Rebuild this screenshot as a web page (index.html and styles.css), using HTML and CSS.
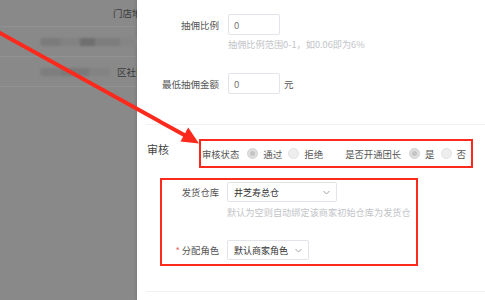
FILE: index.html
```html
<!DOCTYPE html>
<html lang="zh-CN">
<head>
    <meta charset="UTF-8">
    <meta name="viewport" content="width=device-width, initial-scale=1.0">
    <title>商家编辑</title>
    <link rel="stylesheet" href="styles.css">
</head>
<body>
    <div class="screen">
        <div class="bg-page">
            <div class="bg-row bg-head"><span class="bg-head-text">门店地址</span></div>
            <div class="bg-row"><span class="blur blur-long"></span></div>
            <div class="bg-row"><span class="blur blur-short"></span><span class="bg-cell">区社区</span></div>
        </div>

        <div class="drawer">
            <div class="form-item">
                <label class="form-label">抽佣比例</label>
                <input class="text-input" type="text" value="0">
            </div>
            <p class="hint hint-rate">抽佣比例范围0-1，如0.06即为6%</p>

            <div class="form-item item-min">
                <label class="form-label">最低抽佣金额</label>
                <input class="text-input" type="text" value="0">
                <span class="unit">元</span>
            </div>

            <div class="divider"></div>

            <div class="section">
                <div class="section-title">审核</div>
                <div class="mark-box audit-box">
                    <span class="inline-label">审核状态</span>
                    <span class="radio-group">
                        <span class="radio checked"></span><span class="radio-text">通过</span>
                        <span class="radio"></span><span class="radio-text">拒绝</span>
                    </span>
                    <span class="inline-label leader-label">是否开通团长</span>
                    <span class="radio-group">
                        <span class="radio checked"></span><span class="radio-text">是</span>
                        <span class="radio"></span><span class="radio-text">否</span>
                    </span>
                </div>
            </div>

            <div class="mark-box store-box">
                <div class="box-item">
                    <label class="box-label">发货仓库</label>
                    <div class="select select-store">
                        <span>井芝寿总仓</span>
                        <svg class="chevron" width="7" height="5" viewBox="0 0 7 5"><path d="M0.5 1 L3.5 4 L6.5 1" fill="none" stroke="#a0a3ab" stroke-width="1"/></svg>
                    </div>
                </div>
                <p class="hint hint-store">默认为空则自动绑定该商家初始仓库为发货仓</p>
                <div class="box-item item-role">
                    <label class="box-label"><span class="required">*</span>分配角色</label>
                    <div class="select select-role">
                        <span>默认商家角色</span>
                        <svg class="chevron" width="7" height="5" viewBox="0 0 7 5"><path d="M0.5 1 L3.5 4 L6.5 1" fill="none" stroke="#a0a3ab" stroke-width="1"/></svg>
                    </div>
                </div>
            </div>

            <div class="divider divider-bottom"></div>
        </div>

        <svg class="arrow" width="485" height="300" viewBox="0 0 485 300">
            <line x1="-4" y1="30.8" x2="187" y2="136.6" stroke="#fb2a1c" stroke-width="4"/>
            <polygon points="199,143.5 180.5,141.5 188.2,127.6" fill="#fb2a1c"/>
        </svg>
    </div>
</body>
</html>
```

FILE: styles.css
```css
body {
    margin: 0;
    font-family: "Noto Sans CJK SC", "Noto Sans", sans-serif;
    color: #333;
}
.screen {
    position: relative;
    width: 485px;
    height: 300px;
    overflow: hidden;
    display: flex;
}

/* dimmed page behind the drawer */
.bg-page {
    width: 137px;
    flex-shrink: 0;
    background: #898989;
    overflow: hidden;
}
.bg-row {
    height: 29px;
    border-bottom: 1px solid #929292;
    display: flex;
    align-items: center;
    white-space: nowrap;
}
.bg-head {
    height: 26px;
}
.bg-head-text {
    flex-shrink: 0;
    margin-left: 113px;
    font-size: 9.5px;
    color: #3a3a3a;
}
.blur {
    flex-shrink: 0;
    display: inline-block;
    height: 8px;
    margin-left: 40px;
    border-radius: 4px;
    filter: blur(1px);
}
.blur-long {
    width: 100px;
    background: linear-gradient(90deg, #7b7b7b 0 20%, #828282 20% 40%, #6f6f6f 40% 55%, #7d7d7d 55% 80%, #858585 80%);
}
.blur-short {
    width: 70px;
    background: linear-gradient(90deg, #7e7e7e 0 30%, #7a7a7a 30% 70%, #838383 70%);
}
.bg-cell {
    flex-shrink: 0;
    margin-left: 7px;
    font-size: 9.5px;
    color: #3a3a3a;
}

/* drawer */
.drawer {
    flex: 1;
    background: #fff;
    padding-top: 14px;
    box-shadow: -1px 0 3px rgba(0, 0, 0, 0.12);
}
.form-item {
    display: flex;
    align-items: center;
    height: 21px;
}
.item-min {
    margin-top: 24px;
}
.form-label {
    width: 82px;
    text-align: right;
    font-size: 9.5px;
    color: #555;
    margin-right: 9px;
}
.text-input {
    box-sizing: border-box;
    width: 52px;
    height: 21px;
    border: 1px solid #e2e4e9;
    border-radius: 2px;
    padding: 0 5px;
    font-family: inherit;
    font-size: 9.5px;
    color: #777;
    outline: none;
}
.unit {
    margin-left: 4px;
    font-size: 9.5px;
    color: #555;
}
.hint {
    margin: 0;
    font-size: 9.2px;
    line-height: 10px;
    color: #c2c4c8;
    white-space: nowrap;
}
.hint-rate {
    margin: 4px 0 0 91px;
}

.divider {
    margin: 30px 0 0 9px;
    border-top: 1px solid #eef0f3;
}
.divider-bottom {
    margin-top: 25px;
}

.section {
    display: flex;
    align-items: flex-start;
    margin-top: 14px;
}
.section-title {
    width: 52px;
    padding-left: 10px;
    padding-top: 4px;
    font-size: 11px;
    line-height: 12px;
    color: #444;
}

/* red highlight boxes */
.mark-box {
    box-sizing: border-box;
    border: 2px solid #fb2a1c;
}
.audit-box {
    width: 274px;
    height: 29px;
    display: flex;
    align-items: center;
    padding-left: 1px;
    white-space: nowrap;
}
.inline-label {
    font-size: 9.3px;
    color: #555;
}
.leader-label {
    margin-left: 16px;
}
.radio-group {
    display: flex;
    align-items: center;
    margin-left: 8px;
}
.radio {
    box-sizing: border-box;
    width: 11px;
    height: 11px;
    border-radius: 50%;
    background: #eeeeee;
    border: 1px solid #e2e2e2;
    display: flex;
    align-items: center;
    justify-content: center;
}
.radio.checked {
    background: #dedede;
    border-color: #d4d4d4;
}
.radio.checked::after {
    content: "";
    width: 5px;
    height: 5px;
    border-radius: 50%;
    background: #c4c4c4;
}
.radio-text {
    margin: 0 6px 0 5px;
    font-size: 9.5px;
    color: #555;
}

.store-box {
    width: 258px;
    height: 88px;
    margin: 10px 0 0 23px;
    padding-top: 2px;
}
.box-item {
    display: flex;
    align-items: center;
    height: 20px;
}
.item-role {
    margin-top: 23px;
}
.box-label {
    width: 57px;
    margin-right: 8px;
    text-align: right;
    font-size: 9.3px;
    color: #555;
    white-space: nowrap;
}
.required {
    color: #f56c6c;
    margin-right: 2px;
}
.select {
    box-sizing: border-box;
    height: 20px;
    border: 1px solid #e2e4e9;
    border-radius: 2px;
    display: flex;
    align-items: center;
    justify-content: space-between;
    padding: 0 6px 0 6px;
    font-size: 9px;
    color: #333;
}
.select-store {
    width: 110px;
}
.select-role {
    width: 82px;
}
.chevron {
    flex-shrink: 0;
}
.hint-store {
    margin: 5px 0 0 65px;
}

.arrow {
    position: absolute;
    left: 0;
    top: 0;
    pointer-events: none;
}
```
